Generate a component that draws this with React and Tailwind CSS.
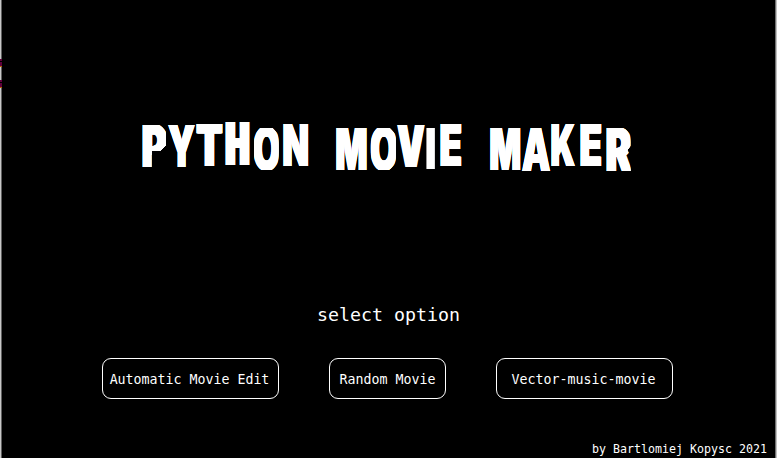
import React, { useMemo } from 'react';

const SIZE = 58;
const FAMILY = 'Inter, "Liberation Sans", sans-serif';

// character, left, top, right, bottom, extra stem weight
const TITLE = [
  [
    ['P', 142, 125, 166, 167, 1.5],
    ['Y', 168, 125, 195, 167, 1],
    ['T', 195.7, 124, 222.7, 166, 1.5],
    ['H', 225, 122, 249.5, 165, 3.5],
    ['O', 254, 128, 278.5, 170, 1],
    ['N', 282.7, 124, 307.7, 166, 1],
  ],
  [
    ['M', 336, 128, 366.7, 170, 1],
    ['O', 370.7, 128, 395.7, 170, 1],
    ['V', 397.3, 125, 425, 167, 2],
    ['I', 426, 128, 435.5, 169, 0],
    ['E', 440, 124, 461.7, 166, 1],
  ],
  [
    ['M', 490, 128, 520.3, 170, 1],
    ['A', 522, 128, 550, 171, 0.5],
    ['K', 551, 124, 575, 166, 1],
    ['E', 580, 124, 601.7, 166, 1],
    ['R', 606, 128, 630.7, 171, 1.5],
  ],
];

// round letters are cut to flat, chamfered corners
const CUTS = {
  O: 'polygon(24% 0, 76% 0, 100% 14%, 100% 86%, 76% 100%, 24% 100%, 0 86%, 0 14%)',
  P: 'polygon(0 0, 76% 0, 100% 14%, 100% 48%, 76% 62%, 40% 62%, 40% 100%, 0 100%)',
  R: 'polygon(0 0, 76% 0, 100% 14%, 100% 42%, 86% 52%, 100% 62%, 100% 100%, 0 100%)',
};

// how far the glyph overshoots its box before the cut: left, right, top, bottom
const OVERSHOOT = {
  O: [1.2, 1.2, 1.4, 1.4],
  P: [0, 1.4, 0, 0],
  R: [0, 1.2, 0, 0],
};

function Letter({ char, width, height, left, top, weight }) {
  const transform = useMemo(() => {
    const ctx = document.createElement('canvas').getContext('2d');
    ctx.font = `900 ${SIZE}px ${FAMILY}`;
    const m = ctx.measureText(char);
    const ascent = m.fontBoundingBoxAscent;
    const baseline = (SIZE - ascent - m.fontBoundingBoxDescent) / 2 + ascent;
    const [ol, or, ot, ob] = OVERSHOOT[char] ?? [0, 0, 0, 0];
    const inkLeft = -m.actualBoundingBoxLeft - weight;
    const inkTop = baseline - m.actualBoundingBoxAscent;
    const inkWidth = m.actualBoundingBoxRight + m.actualBoundingBoxLeft + weight * 2;
    const inkHeight = m.actualBoundingBoxAscent + m.actualBoundingBoxDescent;
    const sx = (width + ol + or) / inkWidth;
    const sy = (height + ot + ob) / inkHeight;
    return `matrix(${sx},0,0,${sy},${-inkLeft * sx - ol},${-inkTop * sy - ot})`;
  }, [char, width, height, weight]);

  const shadow = [-1, -0.66, -0.33, 0.33, 0.66, 1]
    .map((k) => `${k * weight}px 0 0 #fff`)
    .join(',');

  return (
    <span
      className="block shrink-0"
      style={{ width, height, marginLeft: left, marginTop: top, clipPath: CUTS[char] }}
    >
      <span
        className="block w-max origin-top-left font-['Inter','Liberation_Sans',sans-serif] text-[58px] leading-none font-black"
        style={{ transform, textShadow: weight ? shadow : 'none' }}
      >
        {char}
      </span>
    </span>
  );
}

function Title() {
  let cursor = 2;
  return (
    <h1 className="flex h-[50px] items-start">
      {TITLE.map((word, i) => (
        <span key={i} className="flex items-start">
          {word.map(([char, l, t, r, b, weight], j) => {
            const left = l - cursor;
            cursor = r;
            return (
              <Letter key={j} char={char} width={r - l} height={b - t} left={left} top={t - 122} weight={weight} />
            );
          })}
        </span>
      ))}
    </h1>
  );
}

function OptionButton({ className, children }) {
  return (
    <button
      className={`h-[41px] rounded-[9px] border border-white bg-black pt-[3px] text-center text-[13.28px] leading-none whitespace-pre ${className}`}
    >
      {children}
    </button>
  );
}

function EdgeMark() {
  return (
    <span className="flex h-2 w-0.5 flex-col">
      <span className="h-0.5 bg-[#60003c]" />
      <span className="h-px bg-black" />
      <span className="h-1 bg-[#60003c]" />
      <span className="h-px bg-[#b06000]" />
    </span>
  );
}

export default function App() {
  return (
    <div className="flex h-[458px] w-[777px] overflow-hidden bg-black font-['DejaVu_Sans_Mono',monospace] text-white">
      <div className="flex w-0.5 shrink-0 flex-col gap-[13px] border-r border-[#606060] bg-[#c8c8c8] pt-[59px]">
        <EdgeMark />
        <EdgeMark />
      </div>
      <main className="flex w-[773px] shrink-0 flex-col pt-[122px]">
        <Title />
        <p className="mt-[131px] ml-[315px] text-[18.27px] leading-[24px] whitespace-pre">select option</p>
        <div className="mt-[31px] ml-[100px] flex gap-[50px]">
          <OptionButton className="w-[177px] pr-0.5">Automatic Movie Edit</OptionButton>
          <OptionButton className="w-[117px] pr-px pl-px">Random Movie</OptionButton>
          <OptionButton className="w-[177px] pr-0.5">Vector-music-movie</OptionButton>
        </div>
        <footer className="mt-[42px] pr-[8px] text-right text-[11.63px] leading-[16px]">by Bartlomiej Kopysc 2021</footer>
      </main>
      <div className="w-0.5 shrink-0 border-l border-[#707070] bg-[#c0c0c0]" />
    </div>
  );
}
